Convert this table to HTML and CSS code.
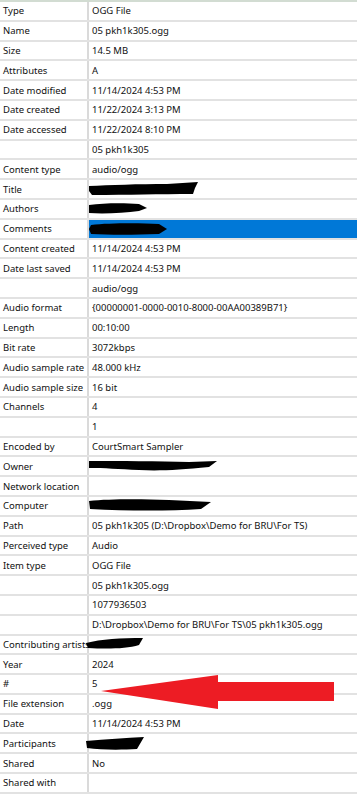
FILE: index.html
```html
<!DOCTYPE html>
<html>
<head>
<meta charset="utf-8">
<link rel="stylesheet" href="styles.css">
</head>
<body>
<div class="page">
  <div class="props">
    <div class="row"><div class="k">Type</div><div class="v">OGG File</div></div>
    <div class="row"><div class="k">Name</div><div class="v">05 pkh1k305.ogg</div></div>
    <div class="row"><div class="k">Size</div><div class="v">14.5 MB</div></div>
    <div class="row"><div class="k">Attributes</div><div class="v">A</div></div>
    <div class="row"><div class="k">Date modified</div><div class="v">11/14/2024 4:53 PM</div></div>
    <div class="row"><div class="k">Date created</div><div class="v">11/22/2024 3:13 PM</div></div>
    <div class="row"><div class="k">Date accessed</div><div class="v">11/22/2024 8:10 PM</div></div>
    <div class="row"><div class="k"></div><div class="v">05 pkh1k305</div></div>
    <div class="row"><div class="k">Content type</div><div class="v">audio/ogg</div></div>
    <div class="row"><div class="k">Title</div><div class="v red-cell"><svg class="redact" width="110" height="14" viewBox="0 0 110 14"><path d="M0 4 C 20 3, 50 2, 78 2 L 109 0 L 106 6 L 104 12 C 70 12, 40 13, 3 13 L 0 9 Z"/></svg></div></div>
    <div class="row"><div class="k">Authors</div><div class="v red-cell"><svg class="redact" width="58" height="11" viewBox="0 0 58 11"><path d="M0 2 C 15 0, 35 0, 50 1 L 58 5 L 50 8 C 35 10, 15 11, 0 10 Z"/></svg></div></div>
    <div class="row"><div class="k">Comments</div><div class="v sel red-cell"><svg class="redact" width="78" height="12" viewBox="0 0 78 12"><path d="M2 2 C 20 0, 50 0, 70 1 L 78 6 L 70 11 C 45 12, 20 12, 2 11 L 0 6 Z"/></svg></div></div>
    <div class="row"><div class="k">Content created</div><div class="v">11/14/2024 4:53 PM</div></div>
    <div class="row"><div class="k">Date last saved</div><div class="v">11/14/2024 4:53 PM</div></div>
    <div class="row"><div class="k"></div><div class="v">audio/ogg</div></div>
    <div class="row"><div class="k">Audio format</div><div class="v">{00000001-0000-0010-8000-00AA00389B71}</div></div>
    <div class="row"><div class="k">Length</div><div class="v">00:10:00</div></div>
    <div class="row"><div class="k">Bit rate</div><div class="v">3072kbps</div></div>
    <div class="row"><div class="k">Audio sample rate</div><div class="v">48.000 kHz</div></div>
    <div class="row"><div class="k">Audio sample size</div><div class="v">16 bit</div></div>
    <div class="row"><div class="k">Channels</div><div class="v">4</div></div>
    <div class="row"><div class="k"></div><div class="v">1</div></div>
    <div class="row"><div class="k">Encoded by</div><div class="v">CourtSmart Sampler</div></div>
    <div class="row"><div class="k">Owner</div><div class="v red-cell"><svg class="redact" width="128" height="12" viewBox="0 0 128 12"><path d="M0 1 C 30 1, 70 1, 100 2 L 128 1 L 120 7 C 90 10, 70 11, 50 10 C 30 9, 15 8, 0 8 Z"/></svg></div></div>
    <div class="row"><div class="k">Network location</div><div class="v"></div></div>
    <div class="row"><div class="k">Computer</div><div class="v red-cell"><svg class="redact" width="122" height="13" viewBox="0 0 122 13"><path d="M0 2 C 20 0, 50 0, 80 1 L 122 3 L 112 10 C 80 12, 40 12, 1 10 Z"/></svg></div></div>
    <div class="row"><div class="k">Path</div><div class="v">05 pkh1k305 (D:\Dropbox\Demo for BRU\For TS)</div></div>
    <div class="row"><div class="k">Perceived type</div><div class="v">Audio</div></div>
    <div class="row"><div class="k">Item type</div><div class="v">OGG File</div></div>
    <div class="row"><div class="k"></div><div class="v">05 pkh1k305.ogg</div></div>
    <div class="row"><div class="k"></div><div class="v">1077936503</div></div>
    <div class="row"><div class="k"></div><div class="v">D:\Dropbox\Demo for BRU\For TS\05 pkh1k305.ogg</div></div>
    <div class="row"><div class="k">Contributing artists</div><div class="v red-cell"><svg class="redact shift" width="57" height="12" viewBox="0 0 57 12"><path d="M0 5 C 15 1, 35 0, 57 0 L 53 7 C 40 11, 20 11, 2 10 Z"/></svg></div></div>
    <div class="row"><div class="k">Year</div><div class="v">2024</div></div>
    <div class="row"><div class="k">#</div><div class="v">5</div></div>
    <div class="row"><div class="k">File extension</div><div class="v">.ogg</div></div>
    <div class="row"><div class="k">Date</div><div class="v">11/14/2024 4:53 PM</div></div>
    <div class="row"><div class="k">Participants</div><div class="v red-cell"><svg class="redact shift" width="58" height="13" viewBox="0 0 58 13"><path d="M0 4 C 20 2, 40 1, 58 0 L 51 12 C 35 13, 15 13, 1 11 Z"/></svg></div></div>
    <div class="row"><div class="k">Shared</div><div class="v">No</div></div>
    <div class="row"><div class="k">Shared with</div><div class="v"></div></div>
  </div>
  <svg class="arrow" width="357" height="800" viewBox="0 0 357 800"><polygon points="101,691 218,675 218,682 334,682 334,701 218,701 218,709"/></svg>
</div>
</body>
</html>
```
FILE: styles.css
```css
html, body {
  margin: 0;
  padding: 0;
  background: #ffffff;
}
.page {
  position: relative;
  width: 357px;
  height: 800px;
  overflow: hidden;
  font-family: "Noto Sans", Lato, sans-serif;
  font-size: 9.5px;
  color: #111111;
}
.props {
  border-top: 2px solid #d2dcd2;
}
.row {
  display: flex;
  height: 19.8px;
  box-sizing: border-box;
  border-bottom: 2px solid #e2e2e2;
}
.k {
  width: 89px;
  flex: none;
  box-sizing: border-box;
  border-right: 2px solid #dadada;
  padding-left: 3px;
  white-space: nowrap;
  display: flex;
  align-items: center;
}
.v {
  flex: 1;
  padding-left: 3px;
  white-space: nowrap;
  display: flex;
  align-items: center;
}
.v.red-cell {
  padding-left: 0;
}
.v.sel {
  background: #0078d7;
}
.redact {
  display: block;
  fill: #000;
}
.redact.shift {
  margin-left: -3px;
}
.arrow {
  position: absolute;
  left: 0;
  top: 0;
  pointer-events: none;
}
.arrow polygon {
  fill: #ed1c24;
}
```
